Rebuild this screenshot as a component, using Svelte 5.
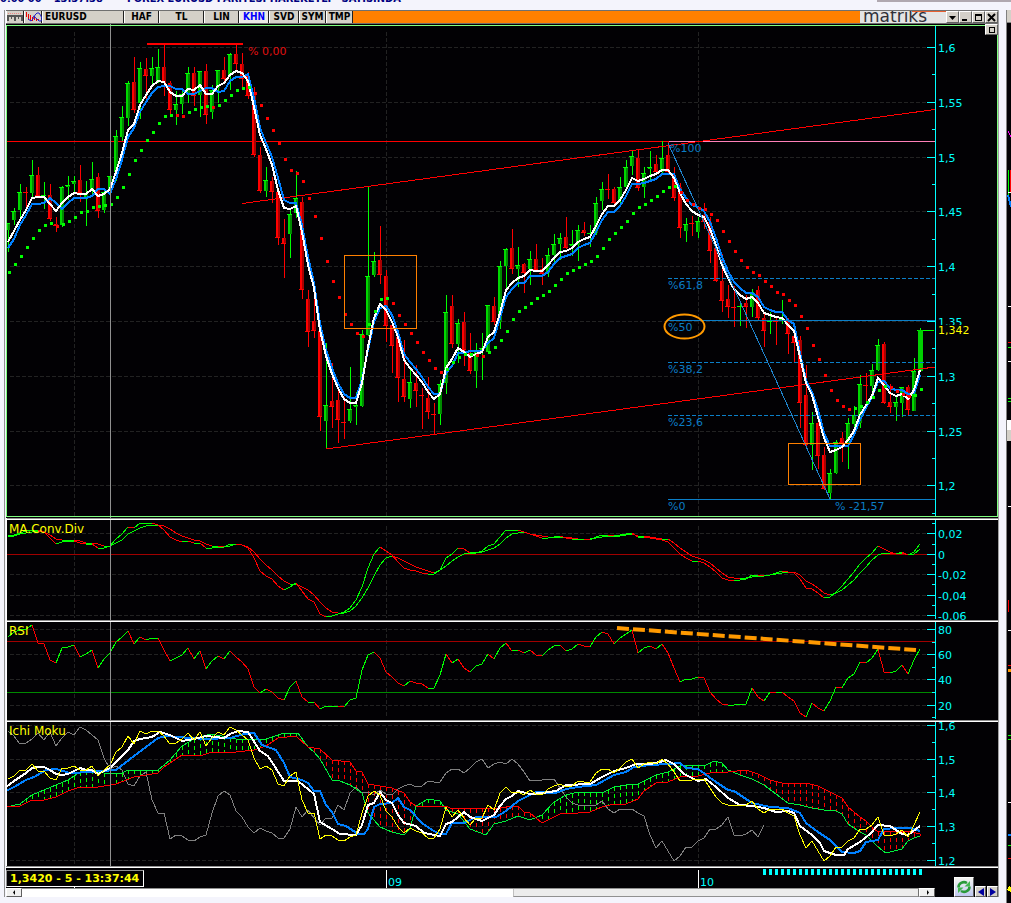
<script>
  const STEP = 6;
  const FIRST_X = 8;
  const AXIS_X = 935;

  const tools = [
    { name: 'HAF', width: 35 },
    { name: 'TL', width: 45 },
    { name: 'LIN', width: 35 },
    { name: 'KHN', width: 30 },
    { name: 'SVD', width: 30 },
    { name: 'SYM', width: 27 },
    { name: 'TMP', width: 27 }
  ];
  let active = 'KHN';

  // one bar per entry: high, body top, body bottom, low, rising
  const bars = [
    [223, 223, 230, 252, 1], [208, 211, 220, 225, 1], [184, 192, 210, 217, 1], [187, 192, 193, 207, 0],
    [160, 175, 193, 198, 1], [167, 175, 196, 197, 0], [182, 195, 196, 209, 1], [184, 195, 219, 221, 0],
    [217, 224, 226, 232, 0], [186, 187, 225, 227, 1], [176, 185, 187, 200, 1], [176, 181, 184, 193, 1],
    [165, 180, 193, 202, 0], [181, 193, 198, 226, 1], [162, 179, 190, 195, 1], [173, 177, 211, 218, 0],
    [189, 192, 210, 213, 1], [176, 176, 190, 193, 1], [130, 136, 172, 181, 1], [106, 117, 137, 141, 1],
    [81, 83, 118, 126, 1], [57, 82, 110, 113, 0], [62, 68, 103, 119, 1], [58, 69, 76, 100, 0],
    [57, 68, 76, 87, 1], [49, 67, 82, 83, 1], [44, 67, 83, 96, 0], [81, 83, 110, 116, 0],
    [91, 104, 110, 125, 1], [90, 94, 104, 114, 1], [67, 73, 94, 103, 1], [67, 73, 96, 106, 0],
    [71, 71, 95, 117, 1], [64, 71, 115, 124, 0], [85, 90, 112, 119, 1], [70, 70, 88, 103, 1],
    [57, 70, 79, 83, 0], [53, 54, 75, 90, 1], [45, 54, 64, 70, 0], [53, 64, 79, 87, 0],
    [72, 76, 96, 99, 0], [87, 94, 155, 157, 0], [147, 155, 191, 193, 0], [167, 180, 191, 197, 1],
    [177, 181, 192, 203, 0], [188, 192, 238, 245, 0], [219, 238, 244, 278, 0], [209, 214, 234, 258, 1],
    [171, 198, 213, 218, 1], [197, 202, 290, 299, 0], [290, 299, 332, 347, 0], [297, 321, 331, 338, 0],
    [320, 331, 417, 431, 0], [343, 405, 421, 449, 1], [363, 401, 407, 428, 0], [388, 400, 420, 443, 0],
    [397, 422, 423, 439, 0], [367, 409, 421, 423, 1], [392, 405, 407, 425, 1], [330, 334, 406, 407, 1],
    [187, 276, 335, 336, 1], [252, 261, 275, 277, 1], [226, 260, 275, 284, 0], [270, 276, 326, 342, 0],
    [323, 325, 346, 373, 0], [333, 337, 378, 402, 0], [340, 379, 397, 402, 0], [367, 382, 399, 408, 1],
    [365, 383, 391, 407, 0], [388, 395, 396, 429, 0], [377, 398, 412, 419, 0], [403, 414, 415, 434, 0],
    [380, 384, 414, 425, 1], [295, 312, 383, 394, 1], [295, 306, 344, 348, 0], [319, 323, 344, 363, 1],
    [312, 322, 350, 366, 0], [333, 353, 371, 374, 0], [343, 350, 371, 388, 1], [333, 348, 350, 380, 1],
    [305, 305, 352, 353, 1], [297, 306, 322, 325, 0], [261, 266, 322, 329, 1], [248, 249, 266, 290, 1],
    [229, 248, 269, 274, 0], [247, 265, 269, 287, 1], [263, 264, 273, 293, 0], [251, 259, 269, 285, 1],
    [244, 259, 270, 272, 0], [258, 269, 274, 285, 0], [248, 255, 273, 277, 1], [234, 244, 255, 262, 1],
    [233, 238, 244, 260, 1], [217, 237, 248, 249, 0], [230, 244, 246, 256, 1], [225, 230, 245, 261, 1],
    [222, 230, 233, 236, 0], [225, 233, 234, 247, 1], [197, 203, 233, 235, 1], [182, 189, 201, 210, 1],
    [174, 189, 190, 199, 0], [187, 189, 203, 205, 0], [177, 187, 200, 203, 1], [160, 167, 187, 188, 1],
    [150, 156, 166, 175, 1], [150, 158, 188, 191, 0], [167, 173, 187, 198, 1], [151, 167, 169, 180, 1],
    [155, 164, 172, 175, 0], [141, 158, 172, 174, 1], [141, 155, 172, 173, 0], [167, 175, 198, 201, 0],
    [183, 187, 228, 238, 0], [218, 224, 231, 242, 1], [216, 223, 224, 236, 0], [217, 221, 232, 238, 1],
    [203, 215, 222, 229, 0], [217, 222, 251, 263, 0], [245, 248, 281, 282, 0], [254, 281, 301, 312, 0],
    [285, 299, 307, 318, 0], [286, 307, 308, 327, 0], [302, 306, 307, 326, 1], [295, 303, 307, 328, 0],
    [289, 292, 307, 317, 1], [286, 290, 318, 321, 0], [313, 318, 331, 347, 0], [312, 321, 322, 334, 1],
    [317, 321, 322, 345, 0], [300, 319, 321, 324, 1], [318, 321, 334, 354, 0], [330, 336, 343, 363, 0],
    [336, 340, 403, 428, 0], [365, 395, 445, 447, 0], [412, 423, 445, 470, 1], [422, 423, 456, 469, 0],
    [447, 455, 489, 490, 0], [469, 473, 493, 499, 1], [440, 442, 473, 474, 1], [432, 438, 443, 462, 0],
    [418, 423, 443, 469, 1], [406, 415, 424, 430, 1], [375, 384, 423, 428, 1], [373, 385, 386, 402, 0],
    [364, 370, 386, 397, 1], [339, 345, 370, 371, 1], [342, 344, 403, 404, 0], [384, 402, 407, 413, 0],
    [395, 402, 407, 421, 1], [387, 387, 403, 417, 1], [385, 387, 410, 415, 0], [358, 371, 411, 411, 1],
    [328, 330, 371, 371, 1]
  ];

  const fastAverage = [
    242, 231, 220, 210, 198, 197, 197, 204, 211, 203, 197, 193, 194, 194, 189, 196, 194, 189, 172, 153,
    130, 124, 105, 95, 86, 81, 82, 92, 96, 96, 89, 90, 85, 94, 94, 86, 83, 75, 71, 73,
    81, 107, 135, 149, 165, 190, 208, 209, 206, 232, 265, 288, 330, 356, 374, 388, 399, 403, 403, 383,
    347, 318, 304, 310, 322, 337, 360, 368, 375, 382, 392, 399, 394, 368, 359, 348, 352, 357, 354, 352,
    337, 332, 313, 290, 283, 278, 276, 270, 271, 271, 265, 258, 252, 251, 248, 242, 239, 237, 226, 214,
    206, 206, 200, 190, 178, 181, 179, 176, 174, 170, 170, 178, 193, 204, 211, 215, 217, 229, 245, 265,
    278, 289, 295, 299, 297, 303, 313, 315, 317, 318, 325, 331, 357, 383, 395, 417, 438, 452, 450, 447,
    440, 431, 415, 405, 396, 378, 385, 393, 396, 394, 399, 390, 370
  ];

  const slowAverage = [
    248, 239, 225, 215, 204, 204, 203, 198, 203, 209, 203, 198, 198, 198, 196, 189, 189, 194, 179, 160,
    137, 128, 112, 102, 93, 87, 86, 86, 89, 89, 94, 94, 91, 88, 88, 92, 91, 81, 77, 77,
    74, 98, 128, 143, 157, 178, 200, 203, 203, 225, 257, 283, 323, 350, 368, 383, 394, 398, 398, 380,
    350, 322, 308, 306, 315, 332, 354, 362, 369, 377, 387, 394, 394, 373, 366, 353, 353, 351, 351, 351,
    343, 338, 318, 297, 289, 283, 283, 276, 276, 276, 272, 264, 258, 256, 254, 248, 245, 243, 232, 220,
    212, 212, 206, 196, 184, 184, 183, 181, 179, 174, 174, 174, 189, 198, 205, 207, 211, 222, 238, 257,
    271, 282, 288, 293, 293, 297, 307, 310, 312, 312, 320, 324, 353, 380, 392, 410, 433, 446, 446, 446,
    446, 435, 420, 408, 397, 382, 381, 388, 390, 390, 394, 393, 375
  ];

  // parabolic dots, negative ones are above the price
  const sar = [
    272, 264, 256, 247, 238, 230, 225, 223, -226, 224, 221, 217, 212, 211, 207, 206, 205, 204, 197, 187,
    174, 160, 150, 140, 132, 123, 116, 115, -115, -116, 112, 109, 107, 106, -107, 105, 100, 95, 90, 88,
    87, -93, -105, -118, -130, -143, -159, -170, -173, -181, -198, -216, -238, -261, -281, -297, -314, -324, -333, -336,
    324, 311, 299, 298, -303, -315, -324, -333, -342, -352, -360, -368, -372, 369, 362, 357, 354, 354, -355, -356,
    352, 347, 340, 331, 319, 311, 307, 303, 298, 295, 291, 285, 279, 273, 270, 267, 264, 261, 256, 248,
    239, 233, 227, 221, 213, 207, 204, 200, 196, 191, 187, 186, -192, -200, -204, -208, -209, -214, -220, -231,
    -241, -251, -260, -267, -272, -275, -281, -286, -292, -294, -300, -305, -316, -328, -345, -359, -375, -390, -400, -406,
    -409, 408, 406, 402, 397, 390, 386, -387, -391, -394, -396, 395, 389
  ];

  const macd = [
    536, 535, 533, 531, 530, 530, 532, 538, 544, 542, 541, 541, 543, 544, 544, 548, 548, 546, 539, 534,
    527, 528, 523, 523, 523, 525, 530, 537, 540, 542, 541, 543, 543, 548, 548, 547, 547, 544, 544, 545,
    548, 558, 571, 576, 579, 586, 590, 587, 583, 591, 599, 602, 614, 617, 616, 614, 612, 608, 600, 587,
    568, 554, 547, 551, 555, 562, 568, 570, 571, 573, 574, 574, 570, 558, 554, 548, 549, 553, 553, 551,
    546, 544, 537, 530, 530, 530, 532, 534, 536, 538, 538, 537, 536, 538, 539, 539, 539, 540, 537, 535,
    535, 536, 535, 534, 533, 537, 537, 538, 539, 540, 542, 548, 554, 558, 561, 561, 563, 567, 572, 578,
    580, 581, 580, 579, 575, 575, 576, 575, 573, 571, 572, 573, 579, 588, 589, 593, 598, 597, 592, 586,
    579, 572, 564, 558, 553, 546, 549, 552, 554, 552, 555, 552, 544
  ];

  const macdSignal = [
    537, 536, 534, 533, 532, 531, 532, 535, 539, 540, 540, 540, 541, 543, 543, 544, 546, 546, 543, 540,
    534, 531, 528, 526, 525, 525, 526, 529, 533, 536, 538, 540, 541, 544, 546, 546, 547, 546, 544, 545,
    547, 552, 559, 565, 570, 576, 581, 584, 584, 587, 590, 595, 602, 608, 612, 613, 613, 611, 606, 598,
    588, 576, 565, 558, 556, 558, 561, 564, 567, 569, 571, 573, 570, 566, 561, 557, 554, 553, 552, 552,
    550, 548, 544, 538, 534, 533, 532, 534, 535, 536, 537, 537, 537, 537, 538, 539, 539, 539, 538, 537,
    536, 536, 536, 535, 534, 536, 536, 537, 538, 539, 539, 543, 548, 552, 556, 558, 560, 563, 568, 573,
    577, 578, 579, 578, 577, 576, 576, 575, 574, 573, 572, 572, 575, 581, 584, 588, 593, 595, 593, 590,
    585, 580, 573, 567, 560, 555, 553, 553, 554, 553, 555, 554, 549
  ];

  const rsi = [
    637, 632, 630, 629, 625, 643, 644, 660, 663, 648, 647, 645, 657, 654, 650, 668, 659, 653, 642, 637,
    631, 644, 637, 640, 638, 638, 650, 661, 658, 655, 648, 659, 651, 669, 661, 656, 659, 651, 657, 662,
    669, 687, 693, 689, 692, 698, 700, 687, 681, 697, 702, 702, 709, 706, 706, 706, 707, 700, 698, 670,
    655, 652, 658, 672, 677, 683, 686, 681, 683, 684, 688, 688, 675, 654, 663, 659, 668, 672, 666, 664,
    654, 659, 648, 643, 651, 650, 653, 650, 655, 656, 650, 646, 645, 651, 649, 644, 646, 647, 637, 632,
    634, 644, 638, 634, 630, 653, 648, 646, 649, 644, 653, 668, 682, 679, 679, 677, 678, 692, 699, 704,
    705, 705, 704, 704, 688, 697, 701, 692, 693, 692, 697, 701, 713, 717, 703, 708, 711, 701, 687, 688,
    678, 674, 662, 663, 658, 649, 672, 673, 671, 665, 674, 660, 649
  ];

  const tenkan = [
    [6, 787], [14, 781], [20, 777], [26, 773], [32, 768], [38, 767], [44, 767], [50, 770], [56, 774],
    [62, 775], [68, 774], [74, 771], [80, 768], [86, 770], [92, 770], [98, 774], [104, 771], [110, 768],
    [128, 750], [134, 741], [140, 739], [152, 737], [160, 732], [170, 735], [182, 741], [194, 739],
    [206, 736], [224, 738], [230, 734], [238, 731], [248, 732], [260, 751], [268, 756], [284, 781],
    [298, 781], [314, 794], [320, 822], [332, 829], [340, 834], [356, 835], [362, 825], [368, 805],
    [374, 803], [380, 792], [386, 800], [392, 803], [398, 815], [404, 823], [416, 826], [424, 833],
    [440, 836], [446, 824], [452, 822], [458, 817], [464, 812], [470, 817], [482, 821], [494, 815],
    [500, 806], [506, 799], [512, 796], [518, 791], [530, 794], [542, 793], [556, 791], [566, 785],
    [590, 784], [602, 777], [614, 771], [626, 768], [636, 764], [650, 764], [660, 762], [666, 760],
    [674, 764], [684, 774], [698, 781], [706, 779], [716, 787], [728, 798], [740, 805], [752, 806],
    [764, 808], [776, 812], [788, 811], [794, 813], [800, 826], [812, 835], [820, 843], [824, 851],
    [836, 855], [844, 855], [848, 849], [860, 842], [870, 834], [878, 825], [890, 826], [902, 834],
    [908, 835], [920, 826]
  ];

  const kijun = [
    [6, 791], [14, 787], [26, 780], [34, 777], [46, 770], [56, 769], [70, 773], [90, 772], [116, 770],
    [134, 756], [146, 747], [158, 738], [166, 736], [190, 738], [206, 739], [230, 738], [244, 734],
    [254, 733], [262, 745], [276, 750], [284, 763], [290, 777], [302, 780], [308, 783], [314, 791],
    [320, 791], [326, 805], [332, 812], [338, 824], [346, 826], [358, 834], [364, 834], [368, 829],
    [374, 807], [380, 804], [392, 803], [398, 798], [404, 807], [410, 810], [422, 823], [432, 830],
    [440, 834], [446, 834], [452, 823], [464, 823], [476, 817], [496, 817], [506, 811], [512, 806],
    [518, 801], [530, 795], [536, 792], [556, 793], [566, 789], [578, 787], [596, 785], [614, 775],
    [626, 772], [634, 767], [650, 765], [668, 764], [680, 763], [686, 768], [698, 769], [716, 782],
    [728, 790], [734, 791], [752, 803], [770, 807], [788, 808], [800, 813], [806, 823], [818, 832],
    [830, 840], [842, 852], [854, 853], [860, 851], [866, 842], [878, 840], [884, 829], [896, 828],
    [910, 828], [920, 831]
  ];

  const spanA = [
    [6, 807], [20, 804], [32, 795], [44, 790], [56, 785], [68, 780], [80, 772], [92, 770], [104, 773],
    [122, 773], [128, 770], [146, 771], [158, 770], [170, 760], [182, 746], [194, 739], [210, 734],
    [222, 736], [236, 739], [266, 739], [284, 733], [298, 733], [308, 747], [314, 752], [320, 759],
    [332, 780], [340, 781], [350, 785], [362, 793], [368, 813], [380, 827], [392, 832], [404, 835],
    [410, 829], [416, 806], [428, 799], [440, 801], [446, 810], [458, 814], [470, 829], [486, 835],
    [494, 824], [506, 821], [518, 816], [530, 820], [542, 815], [554, 802], [566, 795], [578, 792],
    [602, 793], [614, 787], [626, 785], [638, 784], [656, 775], [668, 772], [680, 766], [698, 765],
    [706, 765], [714, 761], [722, 763], [728, 770], [740, 775], [752, 779], [764, 785], [776, 794],
    [788, 803], [800, 805], [812, 808], [824, 810], [836, 811], [842, 814], [848, 824], [860, 832],
    [866, 835], [878, 847], [886, 853], [902, 849], [908, 841], [914, 838], [920, 836]
  ];

  const spanB = [
    [6, 807], [20, 806], [32, 800], [44, 800], [56, 797], [68, 791], [80, 787], [98, 787], [116, 784],
    [134, 777], [158, 773], [164, 767], [182, 755], [200, 756], [212, 752], [236, 752], [254, 750],
    [266, 746], [278, 738], [296, 736], [308, 747], [320, 749], [332, 760], [350, 762], [356, 771],
    [362, 772], [368, 784], [380, 786], [392, 788], [404, 793], [410, 802], [416, 806], [446, 806],
    [452, 809], [500, 808], [512, 806], [518, 806], [524, 812], [530, 813], [542, 823], [560, 814],
    [578, 813], [590, 812], [602, 807], [614, 804], [626, 804], [638, 799], [644, 791], [656, 783],
    [668, 782], [680, 777], [698, 776], [710, 773], [728, 772], [746, 770], [758, 774], [770, 780],
    [782, 783], [806, 783], [818, 786], [830, 792], [842, 798], [848, 807], [860, 817], [866, 821],
    [872, 827], [878, 832], [896, 831], [908, 831], [920, 834]
  ];

  const panels = [
    {
      id: 'price', title: '', top: 24, height: 494,
      ticks: [[47, '1,6'], [102, '1,55'], [157, '1,5'], [211, '1,45'], [266, '1,4'], [321, '1,35'], [376, '1,3'], [431, '1,25'], [485, '1,2']],
      minor: [74, 129, 184, 239, 294, 348, 403, 458, 513]
    },
    {
      id: 'macd', title: 'MA.Conv.Div', top: 518, height: 102,
      ticks: [[533, '0,02'], [554, '0'], [574, '-0,02'], [595, '-0,04'], [615, '-0,06']],
      minor: [523, 544, 564, 584, 605]
    },
    {
      id: 'rsi', title: 'RSI', top: 620, height: 100,
      ticks: [[629, '80'], [654, '60'], [679, '40'], [705, '20']],
      minor: [642, 667, 692, 717]
    },
    {
      id: 'ichimoku', title: 'Ichi Moku', top: 720, height: 148,
      ticks: [[725, '1,6'], [759, '1,5'], [792, '1,4'], [826, '1,3'], [860, '1,2']],
      minor: [742, 776, 809, 843]
    }
  ];

  const fibs = [
    { y: 278, label: '%61,8', dashed: true },
    { y: 320, label: '%50', dashed: false },
    { y: 362, label: '%38,2', dashed: true },
    { y: 415, label: '%23,6', dashed: true },
    { y: 499, label: '%0', dashed: false }
  ];

  const months = [74, 386, 698];
  const sessions = Array.from({ length: 27 }, (_, i) => 763 + i * STEP);

  const barX = (i) => FIRST_X + i * STEP;
  const series = (ys) => ys.map((y, i) => `${barX(i)},${y}`).join(' ');
  const line = (points) => points.map((p) => p.join(',')).join(' ');

  // splits a series into its rising and falling segments
  function slopes(ys, rising) {
    let d = '';
    for (let i = 1; i < ys.length; i++) {
      if ((ys[i] <= ys[i - 1]) === rising) {
        d += `M${barX(i - 1)} ${ys[i - 1]}L${barX(i)} ${ys[i]}`;
      }
    }
    return d;
  }

  function valueAt(points, x) {
    const n = points.findIndex((p) => p[0] >= x);
    if (n < 1) return points[0][1];
    const [x0, y0] = points[n - 1];
    const [x1, y1] = points[n];
    return Math.round(y0 + ((y1 - y0) * (x - x0)) / (x1 - x0));
  }

  const closes = bars.map((b) => Math.round(725 + (((b[4] ? b[1] : b[2]) - 47) * 135) / 438));
  const lagging = closes.slice(25, 152);

  const cloud = bars.map((_, i) => {
    const x = barX(i);
    return { x, a: valueAt(spanA, x), b: valueAt(spanB, x) };
  });
</script>

<div class="desktop">
  <div class="behind">
    <span>0,00 00</span><span>13:37:38</span><span class="news">FOREX EURUSD PARITESI HAREKETLI &nbsp; SATISINDA</span>
    <i></i>
  </div>

  <div class="row">
    <main class="window">
      <header class="toolbar">
        <button class="tool icon" aria-label="Şablon">
          <svg width="16" height="11" viewBox="0 0 16 11" shape-rendering="crispEdges">
            <path d="M1 1h14M1 3h14" stroke="#e88" stroke-dasharray="1 1" />
            <path d="M1 9V4h14v5M8 4v5" stroke="#555" stroke-width="2" fill="none" />
            <path d="M4.500 4v3M11.500 4v3" stroke="#555" />
          </svg>
        </button>
        <button class="tool icon" aria-label="Gösterge">
          <svg width="18" height="11" viewBox="0 0 18 11">
            <path d="M1.500 0v5M3.500 2v6M5.500 3v6M7.500 5v4M9.500 4v4M11.500 6v3M13.500 7v2" stroke="#e00" />
            <path d="M3 7l3 2 2-2 2-4 2-2h2l2 3 1 3-1 2h-2l-3-3-3-2" stroke="#22c" fill="none" />
          </svg>
        </button>
        <button class="tool symbol">EURUSD</button>
        {#each tools as tool}
          <button
            class="tool"
            class:active={active === tool.name}
            style="width: {tool.width}px"
            on:click={() => (active = tool.name)}
          >{tool.name}</button>
        {/each}
        <div class="fill"></div>
        <div class="brand">matriks</div>
        <button class="win" aria-label="Menü"><svg viewBox="0 0 9 9"><path d="M1 3h7L4.500 7z" /></svg></button>
        <button class="win" aria-label="Küçült"><svg viewBox="0 0 9 9"><path d="M1 6h5v2H1z" /></svg></button>
        <button class="win" aria-label="Büyüt"><svg viewBox="0 0 9 9"><path d="M1 1h7v7H1zM2 3v4h5V3z" fill-rule="evenodd" /></svg></button>
        <button class="win" aria-label="Kapat"><svg viewBox="0 0 9 9"><path d="M1 1l7 7M8 1l-7 7" stroke="#000" stroke-width="2" /></svg></button>
      </header>

      <section class="charts">
        <button class="restore" aria-label="Paneli büyüt"><span></span></button>
        {#each panels as panel}
          <svg class="panel" viewBox="6 {panel.top} 992 {panel.height}" role="img" aria-label={panel.title || 'EURUSD'}>
            <g class="lines">
              <rect x="6" y={panel.top} width="992" height={panel.height} fill="#020104" />
              {#each panel.ticks as [y]}
                <path class="grid" d="M10 {y}.500H{AXIS_X - 8}" />
              {/each}
              {#each months as x}
                <path class="grid" d="M{x}.500 {panel.top + 8}V{panel.top + panel.height - 2}" />
              {/each}

              {#if panel.id === 'price'}
                <path d="M6 141.500H668" stroke="#f00" />
                <path d="M668 141.500H935" stroke="#ff80b8" />
                <path d="M147 44H243" stroke="#f00" stroke-width="2" />
                {#each bars as [high, top, bottom, low, up], i}
                  <g transform="translate({barX(i)} 0)">
                    <rect x="0" y={high} width="1" height={low - high} fill={up ? '#0f0' : '#f00'} />
                    <rect x="-2" y={top} width="2" height={Math.max(1, bottom - top)} fill={up ? '#00d800' : '#f00'} />
                    <rect x="0" y={top} width="2" height={Math.max(1, bottom - top)} fill={up ? '#008a00' : '#a80000'} />
                    <rect x="-3" y={up ? top : bottom - 1} width="5" height="1" fill={up ? '#0f0' : '#f00'} />
                  </g>
                {/each}
                <rect x="918" y="330" width="5" height="41" fill="#00d000" />
                <path d="M242 203.500L935 109.500M326 449L935 367" stroke="#f00" fill="none" />
                <polyline points={series(slowAverage)} stroke="#0080ff" stroke-width="2" fill="none" />
                <polyline points={series(fastAverage)} stroke="#fff" stroke-width="2" fill="none" />
                {#each sar as y, i}
                  <rect x={barX(i)} y={Math.abs(y) - 1} width="3" height="3" fill={y > 0 ? '#0f0' : '#f00'} />
                {/each}
                {#each fibs as fib}
                  <path d="M668 {fib.y}.500H935" stroke="#0b7fc8" stroke-dasharray={fib.dashed ? '4 2' : 'none'} />
                {/each}
                <path d="M668 143L830 499" stroke="#1f84cc" />
                <rect x="344.500" y="255.500" width="72" height="73" fill="none" stroke="#ff8000" />
                <rect x="788.500" y="443.500" width="72" height="41" fill="none" stroke="#ff8000" />
                <path d="M923 330.500H934" stroke="#0f0" />
              {:else if panel.id === 'macd'}
                <path d="M6 554.500H935" stroke="#a00000" />
                {#each [macdSignal, macd] as values}
                  <path d={slopes(values, true)} stroke="#0f0" />
                  <path d={slopes(values, false)} stroke="#f00" />
                {/each}
              {:else if panel.id === 'rsi'}
                <path d="M6 641.500H935" stroke="#a00000" />
                <path d="M6 692.500H935" stroke="#008a00" />
                <path d={slopes(rsi, true)} stroke="#0f0" />
                <path d={slopes(rsi, false)} stroke="#f00" />
              {:else}
                {#each cloud as { x, a, b }}
                  <path d="M{x}.500 {Math.min(a, b)}V{Math.max(a, b)}" stroke={a < b ? '#0f0' : '#f00'} stroke-dasharray="4 3" />
                {/each}
                <polyline points={series(lagging)} stroke="#808080" fill="none" />
                <polyline points={line(spanA)} stroke="#00f03c" fill="none" />
                <polyline points={line(spanB)} stroke="#f00" fill="none" />
                <polyline points={line(kijun)} stroke="#0080ff" stroke-width="2" fill="none" />
                <polyline points={line(tenkan)} stroke="#fff" stroke-width="2" fill="none" />
                <polyline points={series(closes)} stroke="#ff0" fill="none" />
              {/if}

              <path d="M110.500 {panel.top}V{panel.top + panel.height}" stroke="#909090" />
              <path d="M{AXIS_X}.500 {panel.top + 2}V{panel.top + panel.height - 1}" stroke="#0ff" />
              {#each panel.ticks as [y]}
                <path d="M{AXIS_X - 8} {y}.500H{AXIS_X}" stroke="#0ff" />
              {/each}
              {#each panel.minor as y}
                <path d="M{AXIS_X - 3} {y}.500H{AXIS_X}" stroke="#0ff" />
              {/each}

              {#if panel.id === 'price'}
                <rect x="6.500" y="25.500" width="991" height="491" fill="none" stroke="#80ff80" />
              {:else}
                <path d="M6 {panel.top}.500H998" stroke="#909090" />
                <path d="M6 {panel.top + 1}.500H998M6.500 {panel.top}V{panel.top + panel.height}" stroke="#fff" />
              {/if}
              {#if panel.id === 'ichimoku'}
                <path d="M6 866.500H998" stroke="#909090" />
                <path d="M6 867.500H998" stroke="#fff" />
              {/if}
            </g>

            {#each panel.ticks as [y, label]}
              <text class="scale" x="938" y={y + 5}>{label}</text>
            {/each}
            {#if panel.title}
              <text class="title" x="9" y={panel.top + 15}>{panel.title}</text>
            {/if}

            {#if panel.id === 'price'}
              <rect x="937" y="325" width="40" height="11" fill="#020104" />
              <text class="last" x="938" y="334">1,342</text>
              <text class="change" x="248" y="55">% 0,00</text>
              <text class="fib" x="670" y="152">%100</text>
              {#each fibs as fib}
                <text class="fib" x="668" y={fib.y + 11}>{fib.label}</text>
              {/each}
              <text class="fib" x="835" y="510">% -21,57</text>
              <ellipse cx="684.500" cy="326.500" rx="20" ry="12" fill="none" stroke="#ff9900" stroke-width="2" />
            {:else if panel.id === 'rsi'}
              <path d="M617 628L916 650" stroke="#ff9900" stroke-width="4" stroke-dasharray="12 4" />
            {/if}
          </svg>
        {/each}
      </section>

      <footer class="bottom">
        <div class="timeline">
          <svg class="panel" viewBox="6 868 929 20" role="img" aria-label="Tarih">
            <g class="lines">
              <rect x="6" y="868" width="929" height="20" fill="#020104" />
              <path d="M74.500 887V888M386.500 870V888M698.500 870V888" stroke="#fff" />
              {#each sessions as x}
                <rect {x} y="869" width="3" height="6" fill="#0ff" />
              {/each}
            </g>
            <text class="scale" x="388" y="886">09</text>
            <text class="scale" x="700" y="886">10</text>
          </svg>
          <output class="status">1,3420 - 5 - 13:37:44</output>
          <div class="scrollbar">
            <button class="arrow" aria-label="Sola kaydır"><svg viewBox="0 0 5 5"><path d="M3 0v5L1 2.500z" /></svg></button>
            <div class="track"><div class="thumb"></div></div>
            <button class="arrow" aria-label="Sağa kaydır"><svg viewBox="0 0 5 5"><path d="M2 0v5l2-2.500z" /></svg></button>
          </div>
        </div>
        <div class="nav">
          <button class="refresh" aria-label="Yenile">
            <svg viewBox="0 0 16 16">
              <path d="M2.500 8.500A5.500 5 0 0 1 11 4" stroke="#2a9a3a" stroke-width="2.500" fill="none" />
              <path d="M13.500 7.500A5.500 5 0 0 1 5 12" stroke="#2a9a3a" stroke-width="2.500" fill="none" />
              <path d="M14 2v5.500H8.500zM2 14V8.500h5.500z" fill="#43b850" />
            </svg>
          </button>
          <button class="step" aria-label="Geri"><svg viewBox="0 0 8 8"><path d="M7 0v8L1 4z" /></svg></button>
          <button class="step" aria-label="İleri"><svg viewBox="0 0 8 8"><path d="M1 0v8l6-4z" /></svg></button>
        </div>
      </footer>
    </main>

    <aside class="neighbour">
      <svg width="5" height="893" viewBox="0 0 5 893" shape-rendering="crispEdges">
        <rect x="0" y="0" width="5" height="893" fill="#808080" />
        <rect x="1" y="0" width="4" height="12" fill="#d4d0c8" />
        <rect x="1" y="13" width="4" height="880" fill="#020104" />
        <path d="M2 121l3 6" stroke="#f0f" />
        <path d="M2.500 160v26M2 337.500h3M2 388.500h3M2 391.500h3" stroke="#0f0" />
        <path d="M4.500 160v22M2 332.500h3M2 590v12M2 655.500h3" stroke="#f00" />
        <path d="M2 182.500h3M2 296.500h3M2 351.500h3M2 496.500h3M2 620.500h3M2 792.500h3" stroke="#fff" />
        <path d="M2 185l3 12" stroke="#0080ff" stroke-width="2" />
        <rect x="1" y="410" width="4" height="10" fill="#fff" />
        <rect x="1" y="420" width="4" height="11" fill="#d4d0c8" />
        <path d="M2 660.500h3" stroke="#ff9900" stroke-width="3" />
        <path d="M2 725.500h3M2 729.500h3M2 835.500h3" stroke="#0f0" />
        <path d="M2 824.500h3M2 848.500h3" stroke="#f00" />
        <path d="M2 824.500h3" stroke="#0080ff" stroke-width="2" />
        <path d="M1 880l2-4 2 2v4z" fill="#ff0" />
      </svg>
    </aside>
  </div>
</div>

<style>
  :global(body) {
    margin: 0;
    background: #f4f4fc;
  }

  .desktop {
    font-family: 'DejaVu Sans', Verdana, sans-serif;
    font-size: 11px;
    background: #f4f4fc;
  }

  .behind {
    display: flex;
    gap: 12px;
    align-items: flex-end;
    height: 2px;
    margin-bottom: 8px;
    overflow: hidden;
    color: #000080;
    font: bold 11px/7px 'DejaVu Sans Condensed', sans-serif;
    white-space: nowrap;
  }

  .news {
    padding-left: 12px;
  }

  .behind i {
    width: 134px;
    height: 2px;
    margin-left: auto;
    background: #b0a8b0;
  }

  .row {
    display: flex;
    align-items: flex-start;
  }

  .window {
    flex: 1;
    min-width: 0;
    margin: 0 7px 0 4px;
    padding-left: 1px;
    border-left: 1px solid #909090;
    border-right: 1px solid #a0a0a0;
  }

  button {
    box-sizing: border-box;
    padding: 0;
    border: 1px solid;
    border-color: #fff #606060 #606060 #fff;
    background: #d4d0c8;
    color: #000;
    font: inherit;
    cursor: pointer;
  }

  button svg {
    display: block;
    margin: auto;
  }

  .toolbar {
    display: flex;
    box-sizing: border-box;
    height: 14px;
    border-top: 1px solid #707070;
    border-bottom: 1px solid #707070;
    background: #d4d0c8;
  }

  .tool {
    flex: none;
    height: 12px;
    border-width: 0 1px 0 1px;
    border-color: #fff #202020 #fff #fff;
    font: bold 10px/12px 'DejaVu Sans Condensed', 'DejaVu Sans', sans-serif;
    white-space: nowrap;
  }

  .tool.icon {
    width: 18px;
  }

  .tool.symbol {
    width: 82px;
    padding-left: 2px;
    text-align: left;
  }

  .tool.active {
    background: #eceae6;
    color: #0000ff;
  }

  .fill {
    flex: 1;
    background: #ff8000;
  }

  .brand {
    box-sizing: border-box;
    width: 86px;
    padding-left: 3px;
    background: linear-gradient(90deg, transparent 60%, #e86030 60%) top / 100% 1px no-repeat, #e4e4e4;
    color: #303038;
    font-size: 17px;
    line-height: 10px;
    overflow: hidden;
  }

  .win {
    width: 13px;
    height: 12px;
  }

  .win svg {
    width: 9px;
    height: 9px;
  }

  .charts {
    position: relative;
  }

  .restore {
    position: absolute;
    top: 0;
    right: 0;
    width: 13px;
    height: 11px;
  }

  .restore span {
    display: block;
    width: 4px;
    height: 4px;
    margin: auto;
    border: 1px solid #000;
  }

  .panel {
    display: block;
    width: 100%;
    height: auto;
  }

  .lines {
    shape-rendering: crispEdges;
  }

  .grid {
    stroke: #222;
    stroke-dasharray: 4 2;
  }

  text {
    font-family: 'DejaVu Sans', Verdana, sans-serif;
    font-size: 11px;
  }

  .scale {
    fill: #00ffff;
  }

  .title {
    fill: #ffff00;
    font-size: 12px;
  }

  .last {
    fill: #ffff00;
  }

  .change {
    fill: #e01010;
  }

  .fib {
    fill: #0b7cc4;
  }

  .bottom {
    display: flex;
    background: #020104;
  }

  .timeline {
    position: relative;
    flex: 1;
    min-width: 0;
  }

  .status {
    position: absolute;
    top: 2px;
    left: 0;
    padding: 0 4px 0 3px;
    border: 1px solid;
    border-color: #909090 #fff #fff #909090;
    background: #020104;
    color: #ffff00;
    font-size: 11px;
    font-weight: bold;
    line-height: 15px;
    white-space: nowrap;
  }

  .scrollbar {
    display: flex;
    height: 9px;
    background: #fff;
  }

  .arrow {
    width: 16px;
    height: 9px;
    background: #f0f0f0;
  }

  .arrow svg {
    width: 5px;
    height: 5px;
  }

  .track {
    display: flex;
    flex: 1;
    justify-content: flex-end;
    border-top: 1px solid #909090;
    background: #fff;
  }

  .thumb {
    width: 45%;
    border-right: 1px solid #707070;
    border-bottom: 1px solid #909090;
    border-left: 1px solid #c0c0c0;
    background: #ececec;
  }

  .nav {
    display: flex;
    flex: none;
    gap: 1px;
    align-items: flex-end;
    justify-content: flex-end;
    width: 63px;
  }

  .refresh {
    width: 20px;
    height: 20px;
    background: linear-gradient(#f4f4f0, #c0c8f0);
  }

  .refresh svg {
    width: 16px;
    height: 16px;
  }

  .step {
    width: 11px;
    height: 11px;
  }

  .step svg {
    width: 8px;
    height: 8px;
    fill: #0000a0;
  }

  .neighbour {
    flex: none;
    width: 5px;
    overflow: hidden;
  }

  .neighbour svg {
    display: block;
  }
</style>
